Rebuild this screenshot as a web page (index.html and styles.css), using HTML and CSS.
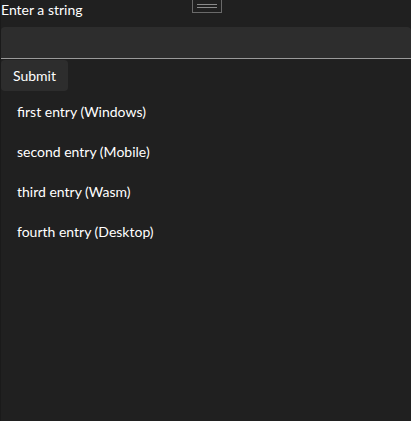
FILE: index.html
```html
<!DOCTYPE html>
<html>
<head>
<meta charset="utf-8">
<link rel="stylesheet" href="styles.css">
</head>
<body>
<div class="window">
  <div class="handle"><span class="line"></span><span class="line"></span></div>
  <label class="header" for="inp">Enter a string</label>
  <div class="textbox"><input id="inp" type="text"></div>
  <button class="submit">Submit</button>
  <ul class="list">
    <li>first entry (Windows)</li>
    <li>second entry (Mobile)</li>
    <li>third entry (Wasm)</li>
    <li>fourth entry (Desktop)</li>
  </ul>
</div>
</body>
</html>
```
FILE: styles.css
```css
html, body {
  margin: 0;
  padding: 0;
  background: #202020;
}
body {
  font-family: Lato, "Noto Sans", sans-serif;
  font-size: 14px;
  color: #ffffff;
}
.window {
  position: relative;
  width: 410px;
  height: 421px;
  border-left: 1px solid #1a1a1a;
  background: #202020;
  display: flex;
  flex-direction: column;
  align-items: flex-start;
}
.handle {
  position: absolute;
  left: 191px;
  top: -1px;
  width: 28px;
  height: 12px;
  border: 1px solid #6a6a6a;
  display: flex;
  flex-direction: column;
  align-items: center;
  justify-content: center;
  gap: 2px;
}
.handle .line {
  display: block;
  width: 20px;
  height: 1px;
  background: #8a8a8a;
}
.header {
  display: block;
  height: 20px;
  line-height: 20px;
  margin-bottom: 7px;
}
.textbox {
  width: 410px;
  height: 31px;
  background: #2d2d2d;
  border-radius: 4px 4px 0 0;
  border-bottom: 1px solid #9a9a9a;
  box-sizing: content-box;
}
.textbox input {
  width: 100%;
  height: 100%;
  border: 0;
  background: transparent;
  outline: none;
  padding: 0 11px;
  box-sizing: border-box;
  color: #fff;
  font: inherit;
}
.submit {
  margin-top: 1px;
  height: 31px;
  width: 67px;
  padding: 0 12px;
  background: #2d2d2d;
  border: 0;
  border-radius: 4px;
  color: #ffffff;
  font: inherit;
  text-align: left;
}
.list {
  list-style: none;
  margin: 1px 0 0 0;
  padding: 0;
  width: 100%;
}
.list li {
  height: 40px;
  line-height: 40px;
  padding-left: 16px;
}
```
